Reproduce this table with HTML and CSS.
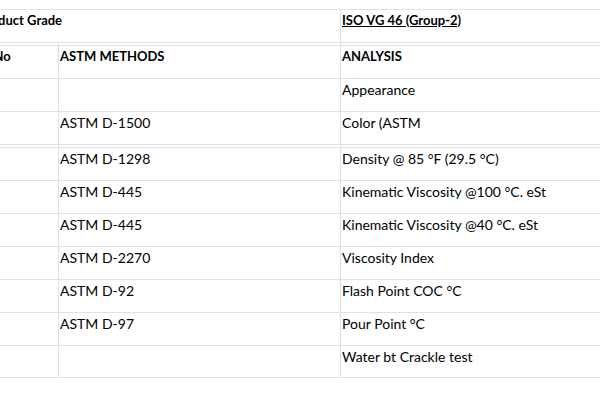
FILE: index.html
```html
<!DOCTYPE html>
<html>
<head>
<meta charset="utf-8">
<link rel="stylesheet" href="styles.css">
</head>
<body>
<div class="sheet">
  <div class="cell span2 bold">Product Grade</div>
  <div class="cell bold under">ISO VG 46 (Group-2)</div>

  <div class="gap"></div><div class="gap"></div><div class="gap"></div>

  <div class="cell bold">S. No</div>
  <div class="cell bold">ASTM METHODS</div>
  <div class="cell bold">ANALYSIS</div>

  <div class="cell"></div>
  <div class="cell"></div>
  <div class="cell">Appearance</div>

  <div class="cell"></div>
  <div class="cell">ASTM D-1500</div>
  <div class="cell">Color (ASTM</div>

  <div class="gap"></div><div class="gap"></div><div class="gap"></div>

  <div class="cell"></div>
  <div class="cell">ASTM D-1298</div>
  <div class="cell">Density @ 85 °F (29.5 °C)</div>

  <div class="cell"></div>
  <div class="cell">ASTM D-445</div>
  <div class="cell">Kinematic Viscosity @100 °C. eSt</div>

  <div class="cell"></div>
  <div class="cell">ASTM D-445</div>
  <div class="cell">Kinematic Viscosity @40 °C. eSt</div>

  <div class="cell"></div>
  <div class="cell">ASTM D-2270</div>
  <div class="cell">Viscosity Index</div>

  <div class="cell"></div>
  <div class="cell">ASTM D-92</div>
  <div class="cell">Flash Point COC °C</div>

  <div class="cell"></div>
  <div class="cell">ASTM D-97</div>
  <div class="cell">Pour Point °C</div>

  <div class="cell last"></div>
  <div class="cell last"></div>
  <div class="cell last">Water bt Crackle test</div>
</div>
</body>
</html>
```

FILE: styles.css
```css
html, body {
  margin: 0;
  padding: 0;
  background: #ffffff;
  overflow: hidden;
}

body {
  font-family: Lato, "Liberation Sans", sans-serif;
  font-size: 14px;
  color: #000000;
}

.sheet {
  margin-top: 9px;
  margin-left: -23px;
  width: 760px;
  display: grid;
  grid-template-columns: 82px 282px 1fr;
  border-top: 1px solid #dfe1e5;
}

.cell {
  box-sizing: border-box;
  height: 33px;
  padding: 2px 2px 0 1px;
  line-height: 17px;
  border-bottom: 1px solid #dfe1e5;
  border-right: 1px solid #dfe1e5;
  white-space: nowrap;
}

.sheet > .cell:nth-child(3n) {
  padding-left: 3px;
}

.cell.last {
  height: 32px;
}

.span2 {
  grid-column: span 2;
}

.gap {
  box-sizing: border-box;
  height: 3px;
  border-bottom: 1px solid #dfe1e5;
  border-right: 1px solid #dfe1e5;
}

.bold {
  font-weight: 700;
  font-size: 13px;
}

.under {
  text-decoration: underline;
}
```
